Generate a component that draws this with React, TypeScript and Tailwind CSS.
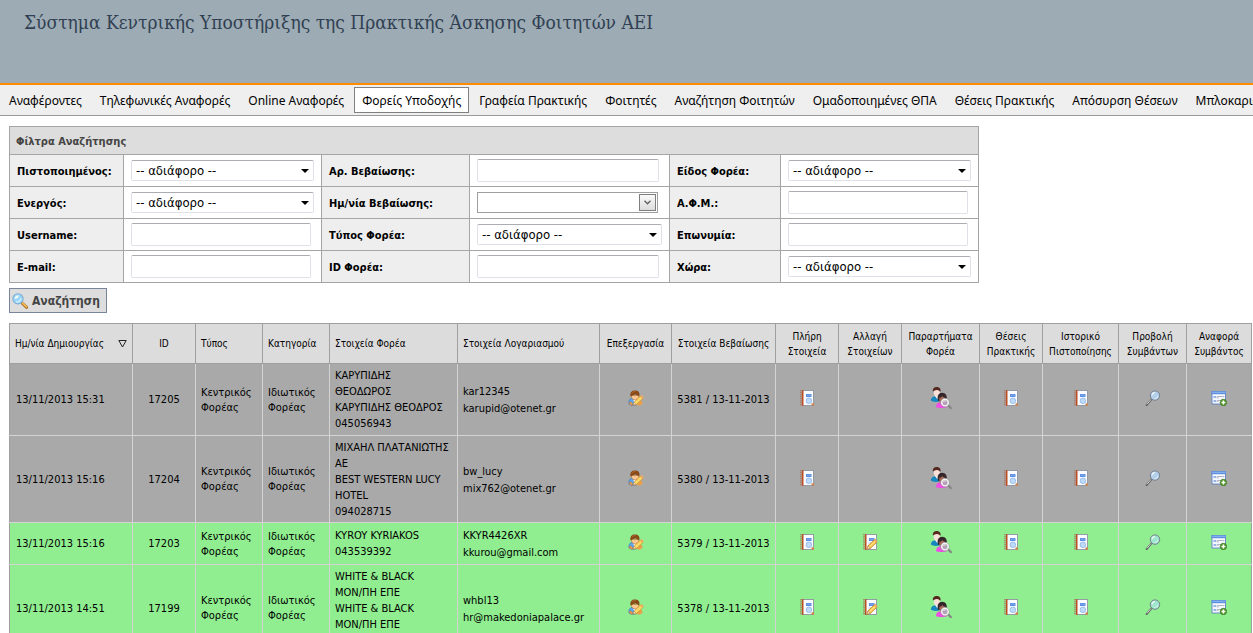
import React from "react";

const navItems = [
  "Αναφέροντες",
  "Τηλεφωνικές Αναφορές",
  "Online Αναφορές",
  "Φορείς Υποδοχής",
  "Γραφεία Πρακτικής",
  "Φοιτητές",
  "Αναζήτηση Φοιτητών",
  "Ομαδοποιημένες ΘΠΑ",
  "Θέσεις Πρακτικής",
  "Απόσυρση Θέσεων",
  "Μπλοκαρισμένοι Φορείς",
];

type Kind = "select" | "input" | "date";
type Field = { id: string; label: string; kind: Kind };

const filterRows: Field[][] = [
  [
    { id: "certified", label: "Πιστοποιημένος:", kind: "select" },
    { id: "certNo", label: "Αρ. Βεβαίωσης:", kind: "input" },
    { id: "kind", label: "Είδος Φορέα:", kind: "select" },
  ],
  [
    { id: "active", label: "Ενεργός:", kind: "select" },
    { id: "certDate", label: "Ημ/νία Βεβαίωσης:", kind: "date" },
    { id: "afm", label: "Α.Φ.Μ.:", kind: "input" },
  ],
  [
    { id: "username", label: "Username:", kind: "input" },
    { id: "type", label: "Τύπος Φορέα:", kind: "select" },
    { id: "name", label: "Επωνυμία:", kind: "input" },
  ],
  [
    { id: "email", label: "E-mail:", kind: "input" },
    { id: "carrierId", label: "ID Φορέα:", kind: "input" },
    { id: "country", label: "Χώρα:", kind: "select" },
  ],
];

const fieldBorder = "rounded-[2px] border border-[#dfe1e8] border-t-[#abadb3] bg-white";

function Control({ field }: { field: Field }) {
  if (field.kind === "select") {
    return (
      <div className="relative">
        <select
          id={field.id}
          className={`block h-[21px] w-full appearance-none pl-1 pr-4 pt-px text-[13px] leading-[18px] text-black ${fieldBorder}`}
        >
          <option>-- αδιάφορο --</option>
        </select>
        <svg viewBox="0 0 8 4" className="pointer-events-none absolute right-[5px] top-[9px] h-1 w-2">
          <path d="M0 0h8L4 4z" fill="#000" />
        </svg>
      </div>
    );
  }
  if (field.kind === "date") {
    return (
      <div className="flex h-[21px] w-[calc(100%-4px)] border border-[#9f9f9f] bg-white p-px">
        <input id={field.id} type="text" className="min-w-0 flex-1 px-1 text-xs outline-none" />
        <button
          type="button"
          aria-label="Ημερολόγιο"
          className="flex w-[17px] items-center justify-center border border-[#7f7f7f] bg-gradient-to-b from-[#fafafa] to-[#dcdcdc]"
        >
          <svg viewBox="0 0 7 5" className="h-[5px] w-[7px]">
            <path d="M0.5 0.8 3.5 3.8 6.5 0.8" fill="none" stroke="#5f5f5f" strokeWidth="1.3" />
          </svg>
        </button>
      </div>
    );
  }
  return (
    <input
      id={field.id}
      type="text"
      className={`block h-[23px] w-[calc(100%-3px)] px-1 text-xs ${fieldBorder}`}
    />
  );
}

function EditUserIcon() {
  return (
    <svg viewBox="0 0 16 16" className="size-4">
      <path d="M1 14c-.6-3 .6-5.300 3-5.700l4 2 1 4.200c-3 1.300-6 1-8-.5z" fill="#5aa6f0" stroke="#2e6cb5" strokeWidth=".5" />
      <path d="M5.200 10l1.600 3 1.600-3z" fill="#fff" />
      <path d="M8.500 14.800l4-4.300 2 1.500-.5 2.500-3 1.200z" fill="#eaa04a" />
      <path d="M.8 13.500l1.800-2 2.400 2.400-1.200 1.600z" fill="#e99a52" stroke="#9c5a24" strokeWidth=".3" />
      <path d="M3.300 5.500h7.600c0 3.100-1.500 4.600-3.700 4.600S3.300 8.500 3.300 5.500z" fill="#fac792" stroke="#a8622f" strokeWidth=".5" />
      <path d="M2.400 6.300C1.900 2.600 3.800.6 6.900.6c3.400 0 5.200 2 4.400 5.500C9.300 6.100 8.600 4.500 7.300 4.600 5.400 4.700 4.500 6.200 2.400 6.300z" fill="#8a4a18" />
      <path d="M4 2.900c1-1.200 2.300-1.500 3.600-1.300" fill="none" stroke="#b9753a" strokeWidth=".8" />
      <path d="M5.200 15l1-3 6-5.800 2.600 2.400-6.200 5.900z" fill="#fbd768" stroke="#c17d18" strokeWidth=".6" />
      <path d="M5.200 15l.9-2.800 2.200 2.100z" fill="#fbe8c4" stroke="#8b5a1a" strokeWidth=".3" />
      <path d="M12.200 6.200l1.300-1.200 2.300 2.200-1 1.400z" fill="#f6a95f" />
    </svg>
  );
}

function NotebookBase() {
  return (
    <>
      <rect x="3.500" y=".5" width="11" height="15" fill="#fbfcff" stroke="#8f93a0" strokeWidth=".9" />
      <rect x="3" y=".2" width="1.500" height="15.600" fill="#bb4f24" />
      {[1, 3, 5, 7, 9, 11, 13, 15].map((y) => (
        <path key={y} d={`M1 ${y - 0.2}h2`} stroke="#a8705c" strokeWidth=".9" />
      ))}
      <rect x="7" y="4" width="5.500" height="3" fill="#5b8fe3" />
      <path d="M7.700 5.200h4.100" stroke="#93b6f2" strokeWidth=".7" />
    </>
  );
}

function NotebookViewIcon() {
  return (
    <svg viewBox="0 0 16 16" className="size-4">
      <NotebookBase />
      <rect x="7.300" y="8.200" width="5.200" height="5.200" rx="2" fill="#c0dbf8" stroke="#8fb5e4" strokeWidth=".9" />
      <path d="M12.700 13.600l2 1.900" stroke="#d98141" strokeWidth="1.900" />
    </svg>
  );
}

function NotebookEditIcon() {
  return (
    <svg viewBox="0 0 16 16" className="size-4">
      <NotebookBase />
      <path d="M6.500 9h3M6 11.500h2" stroke="#b4cdf4" strokeWidth="1" />
      <path d="M5 15.300l1-3.500 6.400-6 2.400 2.500-6.300 6z" fill="#fbc94a" stroke="#c27a1c" strokeWidth=".7" />
      <path d="M7.400 12.900l6-5.700" stroke="#ffeaa3" strokeWidth="1" />
      <path d="M5 15.300l1-3.500 2.500 2.500z" fill="#f8dfb4" stroke="#a0642a" strokeWidth=".4" />
      <path d="M12.400 5.800l1-1 2.200 2.400-.9 1.100z" fill="#e9a06a" />
    </svg>
  );
}

function PeopleSearchIcon() {
  return (
    <svg viewBox="0 0 22 24" className="h-6 w-[22px]">
      <path d="M.8 14.500c.2-2.500 1.700-4 4.200-4.200h4l2.500 4.200c-2 1.700-8.700 2-10.700 0z" fill="#1787c0" />
      <path d="M5 9.800h3.800l-1.300 3.700z" fill="#fff" />
      <ellipse cx="6.800" cy="6.500" rx="3" ry="4.200" fill="#fadfd8" />
      <path d="M2.900 5.600C2.400 2.500 4 1 6.600 1s4.600 1.500 3.800 4.800C9.400 5.600 9 4.200 7 4.100 5 4 4.400 5 2.900 5.600z" fill="#54281f" />
      <path d="M6 21.300c0-3.300 1.400-4.900 4-5.100h4.400l2.600 5.100c-3 1-8.500 1-11 0z" fill="#ee50e6" />
      <path d="M8 14.800c-1.200-4.300.2-8 4-8s5.400 3 4.600 7.600z" fill="#33262a" />
      <ellipse cx="12.200" cy="13" rx="2.900" ry="4" fill="#a9695a" />
      <path d="M9.200 12c1.500-.3 2.500-1.100 3.200-2.100.6 1 1.700 1.700 2.900 1.900l-.9-3.300h-4z" fill="#33262a" />
      <path d="M18 19.200l2.800 2.900" stroke="#858585" strokeWidth="2.200" strokeLinecap="round" />
      <circle cx="15" cy="16.600" r="3.400" fill="#b5a3b8" fillOpacity=".9" stroke="#f4f4f4" strokeWidth="1.700" />
      <circle cx="15" cy="16.600" r="4.400" fill="none" stroke="#8a8a8a" strokeWidth=".5" />
      <path d="M13.400 16c.4-.9 1.200-1.300 2.200-1.200" fill="none" stroke="#fff" strokeWidth=".9" />
    </svg>
  );
}

function MagnifierIcon({ tint }: { tint: string }) {
  return (
    <svg viewBox="0 0 16 16" className="size-4">
      <path d="M1.600 15.200l5-6" stroke="#5a5a5a" strokeWidth="1.800" strokeLinecap="round" />
      <path d="M2 14.300l4.200-5" stroke="#dcdcdc" strokeWidth=".9" />
      <circle cx="10" cy="5.600" r="4.700" fill={tint} stroke="#76808c" strokeWidth="1" />
      <path d="M7 5.200c.3-1.600 1.500-2.500 3-2.500" fill="none" stroke="#fff" strokeOpacity=".8" strokeWidth="1.200" />
      <path d="M9.300 8.600c1.700.2 3-.8 3.400-2.500" fill="none" stroke="#fff" strokeOpacity=".6" strokeWidth="1" />
    </svg>
  );
}

function FormAddIcon() {
  return (
    <svg viewBox="0 0 16 16" className="size-4">
      <rect x="1" y="1.500" width="13.500" height="12.500" fill="#f4f7fd" stroke="#5f83c4" strokeWidth=".9" />
      <rect x=".6" y="1.200" width="14.300" height="3" fill="#5c8fe0" />
      <path d="M1.300 2.300h13" stroke="#9dc0f2" strokeWidth=".8" />
      <path d="M2.500 7h2.800M2.500 11h2.800" stroke="#3f6fd0" strokeWidth="1.200" />
      <path d="M6.800 8.500v-2h6.500M6.800 12v-1.500h3" fill="none" stroke="#b3b6bd" strokeWidth="1.200" />
      <circle cx="12.400" cy="12.500" r="3.200" fill="#5aa033" stroke="#34701b" strokeWidth=".7" />
      <path d="M12.400 10.600v3.800M10.500 12.500h3.800" stroke="#fff" strokeWidth="1.400" />
    </svg>
  );
}

function SearchIcon() {
  return (
    <svg viewBox="0 0 16 16" className="size-4">
      <path d="M10 10l4.600 4.300" stroke="#a8681c" strokeWidth="3" strokeLinecap="round" />
      <path d="M10.200 9.900l4.300 4" stroke="#f6bd55" strokeWidth="1.500" strokeLinecap="round" />
      <circle cx="6" cy="5.800" r="5.100" fill="#9bd6f8" stroke="#7fadd2" strokeWidth="1.100" />
      <path d="M2.600 6c0-2.200 1.500-3.700 3.800-3.700 1.200 1-.8 3.700-3.800 3.700z" fill="#f1fbff" />
      <path d="M4 8.800c2.500.4 4.500-.9 5-3.500" fill="none" stroke="#d3efff" strokeWidth="1.200" />
    </svg>
  );
}

type Column = { title: string; width: string; center?: boolean; sorted?: boolean };

const columns: Column[] = [
  { title: "Ημ/νία Δημιουργίας", width: "w-[123px]", sorted: true },
  { title: "ID", width: "w-[63px]", center: true },
  { title: "Τύπος", width: "w-[67px]" },
  { title: "Κατηγορία", width: "w-[67px]" },
  { title: "Στοιχεία Φορέα", width: "w-[128px]" },
  { title: "Στοιχεία Λογαριασμού", width: "w-[142px]" },
  { title: "Επεξεργασία", width: "w-[72px]", center: true },
  { title: "Στοιχεία Βεβαίωσης", width: "w-[104px]", center: true },
  { title: "Πλήρη Στοιχεία", width: "w-[63px]", center: true },
  { title: "Αλλαγή Στοιχείων", width: "w-[63px]", center: true },
  { title: "Παραρτήματα Φορέα", width: "w-[78px]", center: true },
  { title: "Θέσεις Πρακτικής", width: "w-[63px]", center: true },
  { title: "Ιστορικό Πιστοποίησης", width: "w-[76px]", center: true },
  { title: "Προβολή Συμβάντων", width: "w-[68px]", center: true },
  { title: "Αναφορά Συμβάντος", width: "w-[65px]", center: true },
];

type Row = {
  date: string;
  id: string;
  carrier: string[];
  account: string[];
  cert: string;
  approved: boolean;
  height: string;
};

const rows: Row[] = [
  {
    date: "13/11/2013 15:31",
    id: "17205",
    carrier: ["ΚΑΡΥΠΙΔΗΣ", "ΘΕΟΔΩΡΟΣ", "ΚΑΡΥΠΙΔΗΣ ΘΕΟΔΡΟΣ", "045056943"],
    account: ["kar12345", "karupid@otenet.gr"],
    cert: "5381 / 13-11-2013",
    approved: false,
    height: "h-[72px]",
  },
  {
    date: "13/11/2013 15:16",
    id: "17204",
    carrier: ["ΜΙΧΑΗΛ ΠΛΑΤΑΝΙΩΤΗΣ", "ΑΕ", "BEST WESTERN LUCY", "HOTEL", "094028715"],
    account: ["bw_lucy", "mix762@otenet.gr"],
    cert: "5380 / 13-11-2013",
    approved: false,
    height: "h-[87px]",
  },
  {
    date: "13/11/2013 15:16",
    id: "17203",
    carrier: ["KYROY KYRIAKOS", "043539392"],
    account: ["KKYR4426XR", "kkurou@gmail.com"],
    cert: "5379 / 13-11-2013",
    approved: true,
    height: "h-[42px]",
  },
  {
    date: "13/11/2013 14:51",
    id: "17199",
    carrier: ["WHITE & BLACK", "ΜΟΝ/ΠΗ ΕΠΕ", "WHITE & BLACK", "ΜΟΝ/ΠΗ ΕΠΕ", "\u00a0"],
    account: ["whbl13", "hr@makedoniapalace.gr"],
    cert: "5378 / 13-11-2013",
    approved: true,
    height: "h-[87px]",
  },
];

function IconCell({ label, children }: { label: string; children?: React.ReactNode }) {
  return (
    <td className="border border-[#d3d3d3] p-0 last:border-r-[#9f9f9f]">
      {children && (
        <a href="#" aria-label={label} className="flex justify-center pb-[3px]">
          {children}
        </a>
      )}
    </td>
  );
}

const cell = "border border-[#d3d3d3] px-[5px] py-0";

export default function App() {
  return (
    <div className="h-screen overflow-hidden bg-white font-['DejaVu_Sans_Condensed','DejaVu_Sans',sans-serif] text-[11px] text-black">
      <header className="h-[85px] border-b-2 border-[#ff8c00] bg-[#9dabb4] px-6 pt-2">
        <h1 className="whitespace-nowrap font-['DejaVu_Serif_Condensed','DejaVu_Serif',serif] text-[19px] leading-7 text-[#304052]">
          Σύστημα Κεντρικής Υποστήριξης της Πρακτικής Άσκησης Φοιτητών ΑΕΙ
        </h1>
      </header>

      <nav className="flex h-[31px] items-start gap-0.5 overflow-hidden whitespace-nowrap border-b border-[#999] bg-[#efefef] px-px pt-0.5 font-['Noto_Sans','Open_Sans',sans-serif] text-[12px] leading-[22px]">
        {navItems.map((item, i) => (
          <a
            key={item}
            href="#"
            className={
              i === 3
                ? "shrink-0 border border-[#808080] bg-white px-[7px] pt-0.5"
                : "shrink-0 border border-transparent px-[7px] pt-0.5"
            }
          >
            {item}
          </a>
        ))}
      </nav>

      <main className="pl-[9px] pr-px pt-2.5">
        <form onSubmit={(e) => e.preventDefault()}>
          <table className="w-[970px] table-fixed border-collapse text-left">
            <colgroup>
              <col className="w-[114px]" />
              <col className="w-[198px]" />
              <col className="w-[148px]" />
              <col className="w-[200px]" />
              <col className="w-[111px]" />
              <col className="w-[198px]" />
            </colgroup>
            <thead>
              <tr className="h-7">
                <th colSpan={6} className="border border-[#a5a5a5] bg-[#ddd] px-1.5 pb-0 pt-[3px] font-bold text-[#444]">
                  Φίλτρα Αναζήτησης
                </th>
              </tr>
            </thead>
            <tbody>
              {filterRows.map((row) => (
                <tr key={row[0].id} className="h-8">
                  {row.map((field) => (
                    <React.Fragment key={field.id}>
                      <th className="border border-[#a5a5a5] bg-[#eee] px-[7px] pb-0 pt-[3px] font-bold">
                        <label htmlFor={field.id} className="whitespace-nowrap">
                          {field.label}
                        </label>
                      </th>
                      <td className="border border-[#a5a5a5] bg-white px-[7px] py-0">
                        <Control field={field} />
                      </td>
                    </React.Fragment>
                  ))}
                </tr>
              ))}
            </tbody>
          </table>

          <button
            type="submit"
            className="mt-[5px] flex h-[25px] items-center gap-1 border border-[#78859a] bg-[#ddd] px-0.5 pr-1.5 text-[12px] font-bold text-[#444]"
          >
            <SearchIcon />
            Αναζήτηση
          </button>
        </form>

        <table className="mt-2.5 w-full table-fixed border-collapse text-left leading-[15px]">
          <colgroup>
            {columns.map((c) => (
              <col key={c.title} className={c.width} />
            ))}
          </colgroup>
          <thead>
            <tr className="h-10 bg-[#dcdcdc] text-[10px]">
              {columns.map((c) => (
                <th
                  key={c.title}
                  className={`border border-[#9f9f9f] py-0 font-normal ${c.center ? "px-0.5 text-center" : "px-[5px]"}`}
                >
                  {c.sorted ? (
                    <button type="button" className="flex w-full items-center justify-between whitespace-nowrap">
                      {c.title}
                      <svg viewBox="0 0 9 8" className="h-2 w-[9px]">
                        <path d="M0.8 0.5h7.400L4.500 7z" fill="none" stroke="#222" strokeWidth="1" />
                      </svg>
                    </button>
                  ) : (
                    c.title
                  )}
                </th>
              ))}
            </tr>
          </thead>
          <tbody>
            {rows.map((r) => (
              <tr key={r.id} className={`${r.height} ${r.approved ? "bg-[#90ee90]" : "bg-[#a9a9a9]"}`}>
                <td className="border border-[#d3d3d3] border-l-[#9f9f9f] px-1.5 py-0">{r.date}</td>
                <td className={`${cell} text-center`}>{r.id}</td>
                <td className={cell}>Κεντρικός Φορέας</td>
                <td className={cell}>Ιδιωτικός Φορέας</td>
                <td className="whitespace-nowrap border border-[#d3d3d3] px-[5px] pb-0 pt-px leading-4">
                  {r.carrier.map((line, i) => (
                    <div key={i}>{line}</div>
                  ))}
                </td>
                <td className="whitespace-nowrap border border-[#d3d3d3] px-[5px] pb-0 pt-px leading-[17px]">
                  {r.account.map((line) => (
                    <div key={line}>{line}</div>
                  ))}
                </td>
                <IconCell label="Επεξεργασία">
                  <EditUserIcon />
                </IconCell>
                <td className="whitespace-nowrap border border-[#d3d3d3] p-0 text-center">{r.cert}</td>
                <IconCell label="Πλήρη Στοιχεία">
                  <NotebookViewIcon />
                </IconCell>
                <IconCell label="Αλλαγή Στοιχείων">{r.approved && <NotebookEditIcon />}</IconCell>
                <IconCell label="Παραρτήματα Φορέα">
                  <PeopleSearchIcon />
                </IconCell>
                <IconCell label="Θέσεις Πρακτικής">
                  <NotebookViewIcon />
                </IconCell>
                <IconCell label="Ιστορικό Πιστοποίησης">
                  <NotebookViewIcon />
                </IconCell>
                <IconCell label="Προβολή Συμβάντων">
                  <MagnifierIcon tint={r.approved ? "#9fe6cf" : "#b4cfea"} />
                </IconCell>
                <IconCell label="Αναφορά Συμβάντος">
                  <FormAddIcon />
                </IconCell>
              </tr>
            ))}
          </tbody>
        </table>
      </main>
    </div>
  );
}
